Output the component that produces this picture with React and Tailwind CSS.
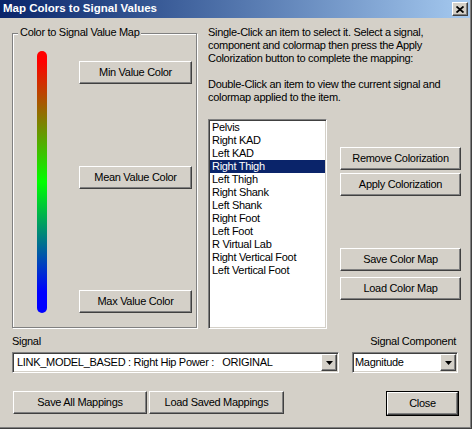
import React from "react";

const raised =
  "border border-t-white border-l-white border-r-[#404040] border-b-[#404040] bg-[#d4d0c8] shadow-[inset_-1px_-1px_0_#808080]";
const sunken =
  "border border-t-[#808080] border-l-[#808080] border-r-white border-b-white shadow-[inset_1px_1px_0_#404040,inset_-1px_-1px_0_#d4d0c8]";

const segments = [
  "Pelvis",
  "Right KAD",
  "Left KAD",
  "Right Thigh",
  "Left Thigh",
  "Right Shank",
  "Left Shank",
  "Right Foot",
  "Left Foot",
  "R Virtual Lab",
  "Right Vertical Foot",
  "Left Vertical Foot",
];

function Button({ children, className = "" }) {
  return (
    <button
      className={`${raised} flex h-[23px] items-center justify-center leading-[13px] ${className}`}
    >
      {children}
    </button>
  );
}

function Arrow() {
  return (
    <div className={`${raised} flex h-[17px] w-[16px] items-center justify-center`}>
      <svg width="7" height="4" viewBox="0 0 7 4">
        <polygon points="0,0 7,0 3.5,4" fill="#000" />
      </svg>
    </div>
  );
}

function Combo({ value, className = "", textClass = "" }) {
  return (
    <div className={`${sunken} flex h-[21px] items-center bg-white p-[1px] ${className}`}>
      <span className={`flex-1 whitespace-pre leading-[13px] ${textClass}`}>{value}</span>
      <Arrow />
    </div>
  );
}

export default function App() {
  return (
    <div className="flex h-[429px] w-[472px] flex-col overflow-hidden border-r border-b border-r-[#404040] border-b-[#404040] bg-[#d4d0c8] font-['Liberation_Sans',Arial,sans-serif] text-[11px] tracking-[-0.3px] text-black shadow-[inset_-1px_-1px_0_#808080]">
      {/* title bar */}
      <div className="flex h-[18px] w-[470px] items-center justify-between bg-linear-to-r from-[#0a246a] to-[#a6caf0] pl-[3px] pr-[2px]">
        <span className="text-[11.5px] font-bold tracking-normal text-white">
          Map Colors to Signal Values
        </span>
        <div className={`${raised} flex h-[14px] w-[16px] items-center justify-center`}>
          <svg width="8" height="7" viewBox="0 0 8 7">
            <path d="M0.5 0.5 L7.5 6.5 M7.5 0.5 L0.5 6.5" stroke="#000" strokeWidth="1.8" />
          </svg>
        </div>
      </div>

      <div className="flex flex-col pl-[12px]">
        <div className="flex items-start">
          {/* group box */}
          <div className="relative mt-[15px] h-[295px] w-[185px] border border-[#808080] shadow-[inset_1px_1px_0_#fff,1px_1px_0_#fff]">
            <span className="absolute left-[5px] top-[-8px] bg-[#d4d0c8] px-[2px] leading-[13px]">
              Color to Signal Value Map
            </span>
            <div className="flex">
              <div className="ml-[24px] mt-[17px] h-[262px] w-[10px] rounded-full bg-[linear-gradient(to_bottom,#ff0000_4%,#00ff00_50%,#0000ff_92%)]" />
              <div className="ml-[32px] flex flex-col">
                <Button className="mt-[27px] w-[113px]">Min Value Color</Button>
                <Button className="mt-[82px] w-[113px]">Mean Value Color</Button>
                <Button className="mt-[101px] w-[113px]">Max Value Color</Button>
              </div>
            </div>
          </div>

          {/* right column */}
          <div className="ml-[11px] flex flex-col">
            <p className="mt-[8px] leading-[13px]">
              Single-Click an item to select it. Select a signal,
              <br />
              component and colormap then press the Apply
              <br />
              Colorization button to complete the mapping:
              <br />
              <br />
              Double-Click an item to view the current signal and
              <br />
              colormap applied to the item.
            </p>
            <div className="mt-[15px] flex">
              <div className={`${sunken} h-[210px] w-[119px] bg-white p-[1px]`}>
                {segments.map((s) => (
                  <div
                    key={s}
                    className={`h-[13px] pl-[2px] leading-[13px] ${
                      s === "Right Thigh" ? "bg-[#0a246a] text-white" : ""
                    }`}
                  >
                    {s}
                  </div>
                ))}
              </div>
              <div className="ml-[13px] flex flex-col">
                <Button className="mt-[28px] w-[121px]">Remove Colorization</Button>
                <Button className="mt-[3px] w-[121px]">Apply Colorization</Button>
                <Button className="mt-[52px] w-[121px]">Save Color Map</Button>
                <Button className="mt-[6px] w-[121px]">Load Color Map</Button>
              </div>
            </div>
          </div>
        </div>

        {/* signal labels */}
        <div className="mt-[6px] flex w-[444px] justify-between leading-[13px]">
          <span>Signal</span>
          <span>Signal Component</span>
        </div>

        <div className="mt-[4px] flex">
          <Combo
            className="w-[327px]"
            textClass="pl-[3px]"
            value={"LINK_MODEL_BASED : Right Hip Power :   ORIGINAL"}
          />
          <Combo className="ml-[13px] w-[106px]" textClass="pl-[1px]" value="Magnitude" />
        </div>

        <div className="mt-[18px] flex w-[447px]">
          <Button className="ml-[1px] w-[134px]">Save All Mappings</Button>
          <Button className="ml-[2px] w-[135px]">Load Saved Mappings</Button>
          <div className="ml-auto border border-black">
            <Button className="h-[22px] w-[71px]">Close</Button>
          </div>
        </div>
      </div>
    </div>
  );
}
